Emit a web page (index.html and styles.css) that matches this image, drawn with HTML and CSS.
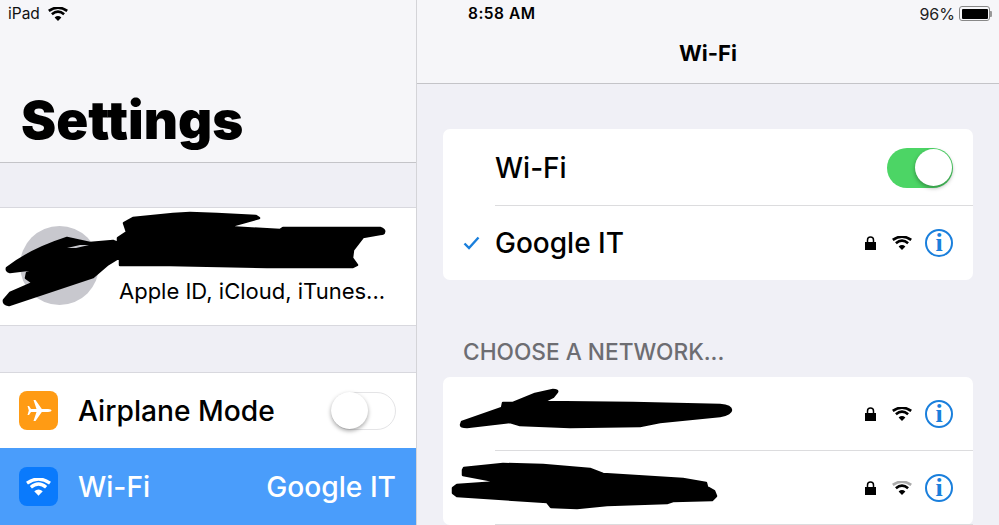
FILE: index.html
```html
<!DOCTYPE html>
<html lang="en">
<head>
<meta charset="utf-8">
<title>Settings - Wi-Fi</title>
<link rel="stylesheet" href="styles.css">
</head>
<body>
<svg width="0" height="0" class="defs">
  <defs>
    <symbol id="wifi-dot" viewBox="0 0 20 14"><path d="M10 14 L6.6 10.4 Q10 7.6 13.4 10.4 Z"/></symbol>
    <symbol id="wifi-mid" viewBox="0 0 20 14"><path d="M3.9 7.2 Q10 1.9 16.1 7.2" fill="none" stroke="currentColor" stroke-width="2.6"/></symbol>
    <symbol id="wifi-out" viewBox="0 0 20 14"><path d="M0.8 3.9 Q10 -2.6 19.2 3.9" fill="none" stroke="currentColor" stroke-width="2.6"/></symbol>
    <symbol id="lock" viewBox="0 0 11 14"><path d="M0 6h11v8H0z"/><path d="M2.5 6.5V4a3 3 0 0 1 6 0v2.5" fill="none" stroke="#000" stroke-width="1.5"/></symbol>
  </defs>
</svg>
<main class="split">
  <section class="master">
    <header class="master-head">
      <div class="status-left">
        <span>iPad</span>
        <svg class="wifi" width="20" height="14"><use href="#wifi-out"/><use href="#wifi-mid"/><use href="#wifi-dot"/></svg>
      </div>
      <h1>Settings</h1>
    </header>
    <div class="group profile">
      <span class="avatar"></span>
      <span class="profile-text">Apple ID, iCloud, iTunes...</span>
    </div>
    <div class="group settings">
      <div class="row airplane">
        <span class="app orange">
          <svg width="27" height="23" viewBox="0 0 27 23"><path fill="#fff" d="M8.5 1 H10.5 L16.8 10 H23 Q26.5 10.4 26.5 11.5 Q26.5 12.6 23 13 H16.8 L10.5 22 H8.5 L11.5 13 H6 L4 16 H2.5 L3.8 11.5 L2.5 7 H4 L6 10 H11.5 Z"/></svg>
        </span>
        <span class="label">Airplane Mode</span>
        <span class="toggle off"><span class="knob"></span></span>
      </div>
      <div class="row selected">
        <span class="app blue">
          <svg class="wifi light" width="25" height="18"><use href="#wifi-out"/><use href="#wifi-mid"/><use href="#wifi-dot"/></svg>
        </span>
        <span class="label">Wi-Fi</span>
        <span class="value">Google IT</span>
      </div>
    </div>
  </section>
  <section class="detail">
    <header class="detail-head">
      <div class="status-right">
        <span class="clock">8:58 AM</span>
        <span class="battery-wrap">96%<span class="battery"><span class="charge"></span></span></span>
      </div>
      <h2>Wi-Fi</h2>
    </header>
    <div class="card first">
      <div class="net-row top">
        <span class="net-name">Wi-Fi</span>
        <span class="toggle on"><span class="knob"></span></span>
      </div>
      <div class="net-row bottom">
        <svg class="check" width="17" height="14" viewBox="0 0 17 14"><path d="M1.5 7.5 L6 12 L15.5 1.5" fill="none" stroke="#1a7fdc" stroke-width="2.4"/></svg>
        <span class="net-name">Google IT</span>
        <span class="net-icons">
          <svg class="lock" width="11" height="14"><use href="#lock"/></svg>
          <svg class="wifi" width="20" height="14"><use href="#wifi-out"/><use href="#wifi-mid"/><use href="#wifi-dot"/></svg>
          <span class="info">i</span>
        </span>
      </div>
    </div>
    <h3>CHOOSE A NETWORK...</h3>
    <div class="card">
      <div class="net-row lined">
        <span class="net-name"></span>
        <span class="net-icons">
          <svg class="lock" width="11" height="14"><use href="#lock"/></svg>
          <svg class="wifi" width="20" height="14"><use href="#wifi-out"/><use href="#wifi-mid"/><use href="#wifi-dot"/></svg>
          <span class="info">i</span>
        </span>
      </div>
      <div class="net-row lined">
        <span class="net-name"></span>
        <span class="net-icons">
          <svg class="lock" width="11" height="14"><use href="#lock"/></svg>
          <svg class="wifi weak" width="20" height="14"><use href="#wifi-out"/><use href="#wifi-mid"/><use href="#wifi-dot"/></svg>
          <span class="info">i</span>
        </span>
      </div>
    </div>
  </section>
</main>
<svg class="scribbles" width="999" height="525" viewBox="0 0 999 525">
  <path d="M7 268 Q30 250 67 238 L90 243 L113 241 L118 243 L118 238 L127 232 L124 223 L133 218 L173 214 L190 213 L217 214 L256 216 L259 218 L227 227 L280 230 L283 228 L380 228 Q385 230 384 232 Q384 234 380 234 L363 237 L353 250 L352 258 L357 265 L353 267 L267 267 L170 265 L120 265 L120 257 L107 265 L93 277 L33 297 L9 305 Q3 304 4 300 L10 293 L33 283 L26 278 L27 273 L43 268 L10 272 Q6 271 7 268Z"/>
  <path class="sliver" d="M67 248 L80 245 L89 245 L76 248Z"/>
  <path d="M461 425 L462 422 L502 408 L503 403 L507 403 L513 403 L535 394 L553 390 Q558 390 557 392 L553 397 L543 402 L633 403 L720 405 Q731 406 731 410 Q731 414 720 416 L660 422 L640 426 L570 427 L520 425 L510 422 L467 427 Q461 427 461 425Z"/>
  <path d="M463 470 L464 468 L503 464 L543 465 L590 469 L603 474 L683 479 L706 483 L707 487 L714 491 L716 496 L712 500 L673 501 L667 503 L607 505 L577 508 L551 507 L547 502 L457 496 L453 493 L453 488 L457 485 L500 482 L463 475Z"/>
</svg>
</body>
</html>
```
FILE: styles.css
```css
html, body {
  margin: 0;
  padding: 0;
  height: 525px;
  overflow: hidden;
  font-family: Inter, "Liberation Sans", sans-serif;
  color: #000;
  background: #efeff5;
}
.defs { position: absolute; }
.split { display: flex; height: 525px; }

.master {
  width: 416px;
  flex: none;
  border-right: 1px solid #d4d4d8;
  background: #efeff5;
}
.master-head {
  height: 163px;
  box-sizing: border-box;
  background: #f6f6f9;
  border-bottom: 1px solid #c4c4c8;
  padding: 3px 0 0 8px;
}
.status-left {
  display: flex;
  align-items: center;
  gap: 8px;
  font-size: 15.5px;
  height: 21px;
  color: #111;
}
.master-head h1 {
  margin: 65px 0 0 13px;
  font-size: 52.8px;
  line-height: 62px;
  font-weight: 900;
}
.wifi { color: #000; fill: #000; }
.wifi.light { color: #fff; fill: #fff; }
.wifi.weak use:first-child { color: #aaa; }

.group {
  background: #fff;
  border-top: 1px solid #d8d8de;
  border-bottom: 1px solid #d8d8de;
}
.profile {
  box-sizing: border-box;
  margin-top: 44px;
  height: 119px;
  display: flex;
  align-items: center;
  padding: 0 0 2px 20px;
}
.avatar {
  width: 79px;
  height: 79px;
  border-radius: 50%;
  background: #c8c8ce;
  flex: none;
}
.profile-text {
  margin: 50px 0 0 20px;
  font-size: 22px;
  font-weight: 400;
  white-space: nowrap;
}
.settings {
  box-sizing: border-box;
  margin-top: 46px;
  border-bottom: 0;
}
.row {
  display: flex;
  align-items: center;
  padding: 0 20px 0 19px;
  height: 75px;
  font-size: 28.2px;
  font-weight: 500;
}
.selected {
  background: #4a9dfb;
  color: #fff;
  height: 77px;
}
.app {
  width: 39px;
  height: 39px;
  border-radius: 8px;
  display: flex;
  align-items: center;
  justify-content: center;
  flex: none;
  margin-right: 20px;
}
.orange { background: #ff9b14; }
.blue { background: #0a7afc; }
.label { flex: 1; }
.value { font-weight: 500; }

.toggle {
  display: flex;
  box-sizing: border-box;
  border-radius: 20px;
  flex: none;
}
.toggle.off {
  width: 65px;
  height: 38px;
  border: 1.5px solid #e4e4e6;
  background: #fff;
  justify-content: flex-start;
}
.toggle.on {
  width: 66px;
  height: 40px;
  background: #4cd565;
  justify-content: flex-end;
  padding: 1.5px;
}
.knob {
  width: 37px;
  height: 37px;
  box-sizing: border-box;
  border-radius: 50%;
  background: #fff;
  box-shadow: 0 2px 4px rgba(0, 0, 0, 0.35);
  flex: none;
}
.off .knob { margin: -1px 0 0 -1px; }

.detail {
  flex: 1;
  min-width: 0;
  background: #f0f0f6;
}
.detail-head {
  height: 84px;
  box-sizing: border-box;
  background: #f6f6f9;
  border-bottom: 1px solid #c4c4c8;
  padding-top: 3px;
}
.status-right {
  display: flex;
  justify-content: space-between;
  align-items: center;
  height: 21px;
  padding: 0 9px 0 51px;
  font-size: 15.5px;
}
.clock { font-weight: 600; letter-spacing: 0.5px; }
.battery-wrap { display: flex; align-items: center; gap: 4px; color: #222; font-size: 16px; }
.battery {
  width: 31px;
  height: 15px;
  box-sizing: border-box;
  border: 1px solid #888;
  border-radius: 3px;
  padding: 1.5px;
  display: flex;
  position: relative;
}
.battery::after {
  content: "";
  position: absolute;
  right: -3px;
  top: 3.5px;
  width: 2px;
  height: 6px;
  background: #999;
  border-radius: 0 1px 1px 0;
}
.charge { flex: 1; background: #000; border-radius: 1px; }
.detail-head h2 {
  margin: 15px 0 0;
  text-align: center;
  font-size: 22px;
  line-height: 28px;
  font-weight: 700;
}
.card {
  margin: 0 26px;
  background: #fff;
  border-radius: 7px;
}
.card.first { margin-top: 45px; }
.net-row {
  display: flex;
  align-items: center;
  height: 74px;
  padding: 0 20px 0 52px;
  position: relative;
}
.net-row.top {
  height: 77px;
  box-sizing: border-box;
}
.net-row.top::after, .net-row.lined::after {
  content: "";
  position: absolute;
  left: 52px;
  right: 0;
  bottom: 0;
  height: 1px;
  background: #dcdcde;
}
.net-name {
  flex: 1;
  font-size: 28px;
  font-weight: 500;
}
.check {
  position: absolute;
  left: 20px;
  top: 30px;
}
.net-icons {
  display: flex;
  align-items: center;
  gap: 0;
}
.lock { margin-right: 16px; fill: #000; }
.net-icons .wifi { margin-right: 13px; }
.info {
  width: 28px;
  height: 28px;
  box-sizing: border-box;
  border: 2.4px solid #1a7fdc;
  border-radius: 50%;
  color: #1a7fdc;
  display: flex;
  align-items: center;
  justify-content: center;
  font-family: "Liberation Serif", serif;
  font-weight: 700;
  font-size: 26px;
  line-height: 1;
}
.detail h3 {
  margin: 58px 0 11px 46px;
  font-size: 22.7px;
  line-height: 28px;
  font-weight: 500;
  color: #6d6d72;
}
.scribbles {
  position: absolute;
  left: 0;
  top: 0;
  fill: #000;
  stroke: #000;
  stroke-width: 2.5;
  stroke-linejoin: round;
  pointer-events: none;
}
.scribbles .sliver {
  fill: #c8c8ce;
  stroke: none;
}
```
